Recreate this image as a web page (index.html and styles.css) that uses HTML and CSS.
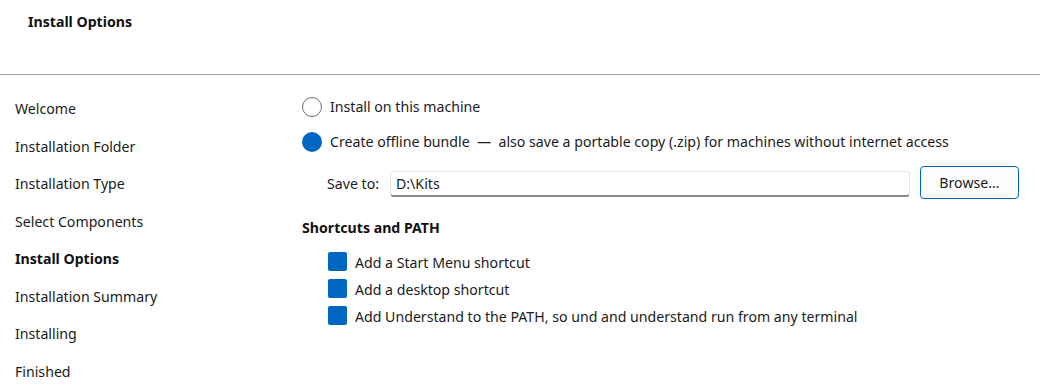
FILE: index.html
```html
<!DOCTYPE html>
<html>
<head>
<meta charset="utf-8">
<link rel="stylesheet" href="styles.css">
</head>
<body>
<div class="header"><div class="title">Install Options</div></div>
<div class="main">
  <div class="sidebar">
    <div class="step">Welcome</div>
    <div class="step">Installation Folder</div>
    <div class="step">Installation Type</div>
    <div class="step">Select Components</div>
    <div class="step current">Install Options</div>
    <div class="step">Installation Summary</div>
    <div class="step">Installing</div>
    <div class="step">Finished</div>
  </div>
  <div class="content">
    <div class="radio-row"><span class="radio"></span><span>Install on this machine</span></div>
    <div class="radio-row"><span class="radio checked"></span><span>Create offline bundle &nbsp;—&nbsp; also save a portable copy (.zip) for machines without internet access</span></div>
    <div class="save-row">
      <span class="save-label">Save to:</span>
      <div class="input">D:\Kits</div>
      <button class="btn">Browse...</button>
    </div>
    <div class="section">Shortcuts and PATH</div>
    <div class="checks">
      <div class="check-row"><span class="check"></span><span>Add a Start Menu shortcut</span></div>
      <div class="check-row"><span class="check"></span><span>Add a desktop shortcut</span></div>
      <div class="check-row"><span class="check"></span><span>Add Understand to the PATH, so und and understand run from any terminal</span></div>
    </div>
  </div>
</div>
</body>
</html>
```
FILE: styles.css
```css
html, body {
  margin: 0;
  padding: 0;
  background: #ffffff;
}
body {
  font-family: "Noto Sans", "Open Sans", sans-serif;
  font-size: 14.15px;
  color: #1b1b1b;
  width: 1040px;
  height: 392px;
  overflow: hidden;
}
.header {
  height: 75px;
  box-sizing: border-box;
  border-bottom: 1px solid #a0a0a0;
  padding: 11px 28px 0;
}
.title {
  font-weight: 700;
  line-height: 22px;
  color: #111;
}
.main {
  display: flex;
}
.sidebar {
  width: 302px;
  padding-top: 15px;
  padding-left: 15px;
  box-sizing: border-box;
  flex: none;
}
.step {
  height: 37.5px;
  line-height: 37.5px;
  white-space: nowrap;
}
.step.current {
  font-weight: 700;
  color: #111;
}
.content {
  flex: 1;
  padding-top: 14px;
  padding-right: 21px;
}
.radio-row {
  height: 35px;
  display: flex;
  align-items: center;
  gap: 8px;
  white-space: nowrap;
}
.radio {
  width: 20px;
  height: 20px;
  box-sizing: border-box;
  border-radius: 50%;
  border: 1px solid #6b6b6b;
  background: #fff;
  flex: none;
}
.radio.checked {
  border: none;
  background: #0067c0;
}
.save-row {
  display: flex;
  align-items: center;
  height: 42px;
  margin-top: 2px;
  padding-left: 25px;
}
.save-label {
  width: 63px;
  flex: none;
  padding-top: 2px;
}
.input {
  flex: 1;
  height: 26px;
  box-sizing: border-box;
  border: 1px solid #e5e5e5;
  border-bottom: 2px solid #8a8a8a;
  border-radius: 4px;
  padding: 0 5px;
  line-height: 24px;
  margin-top: 3px;
}
.btn {
  margin-left: 10px;
  width: 99px;
  height: 33px;
  border: 1px solid #0067c0;
  border-radius: 4px;
  background: #fdfdfd;
  font: inherit;
  color: #1b1b1b;
  padding: 0;
}
.section {
  font-weight: 700;
  color: #111;
  height: 22px;
  line-height: 22px;
  margin-top: 14px;
}
.checks {
  margin-top: 9px;
  padding-left: 26px;
}
.check-row {
  height: 27px;
  display: flex;
  align-items: center;
  gap: 8px;
  white-space: nowrap;
}
.check-row span:last-child {
  padding-top: 1px;
}
.check {
  width: 19px;
  height: 19px;
  border-radius: 2px;
  background: #0067c0;
  flex: none;
}
```
